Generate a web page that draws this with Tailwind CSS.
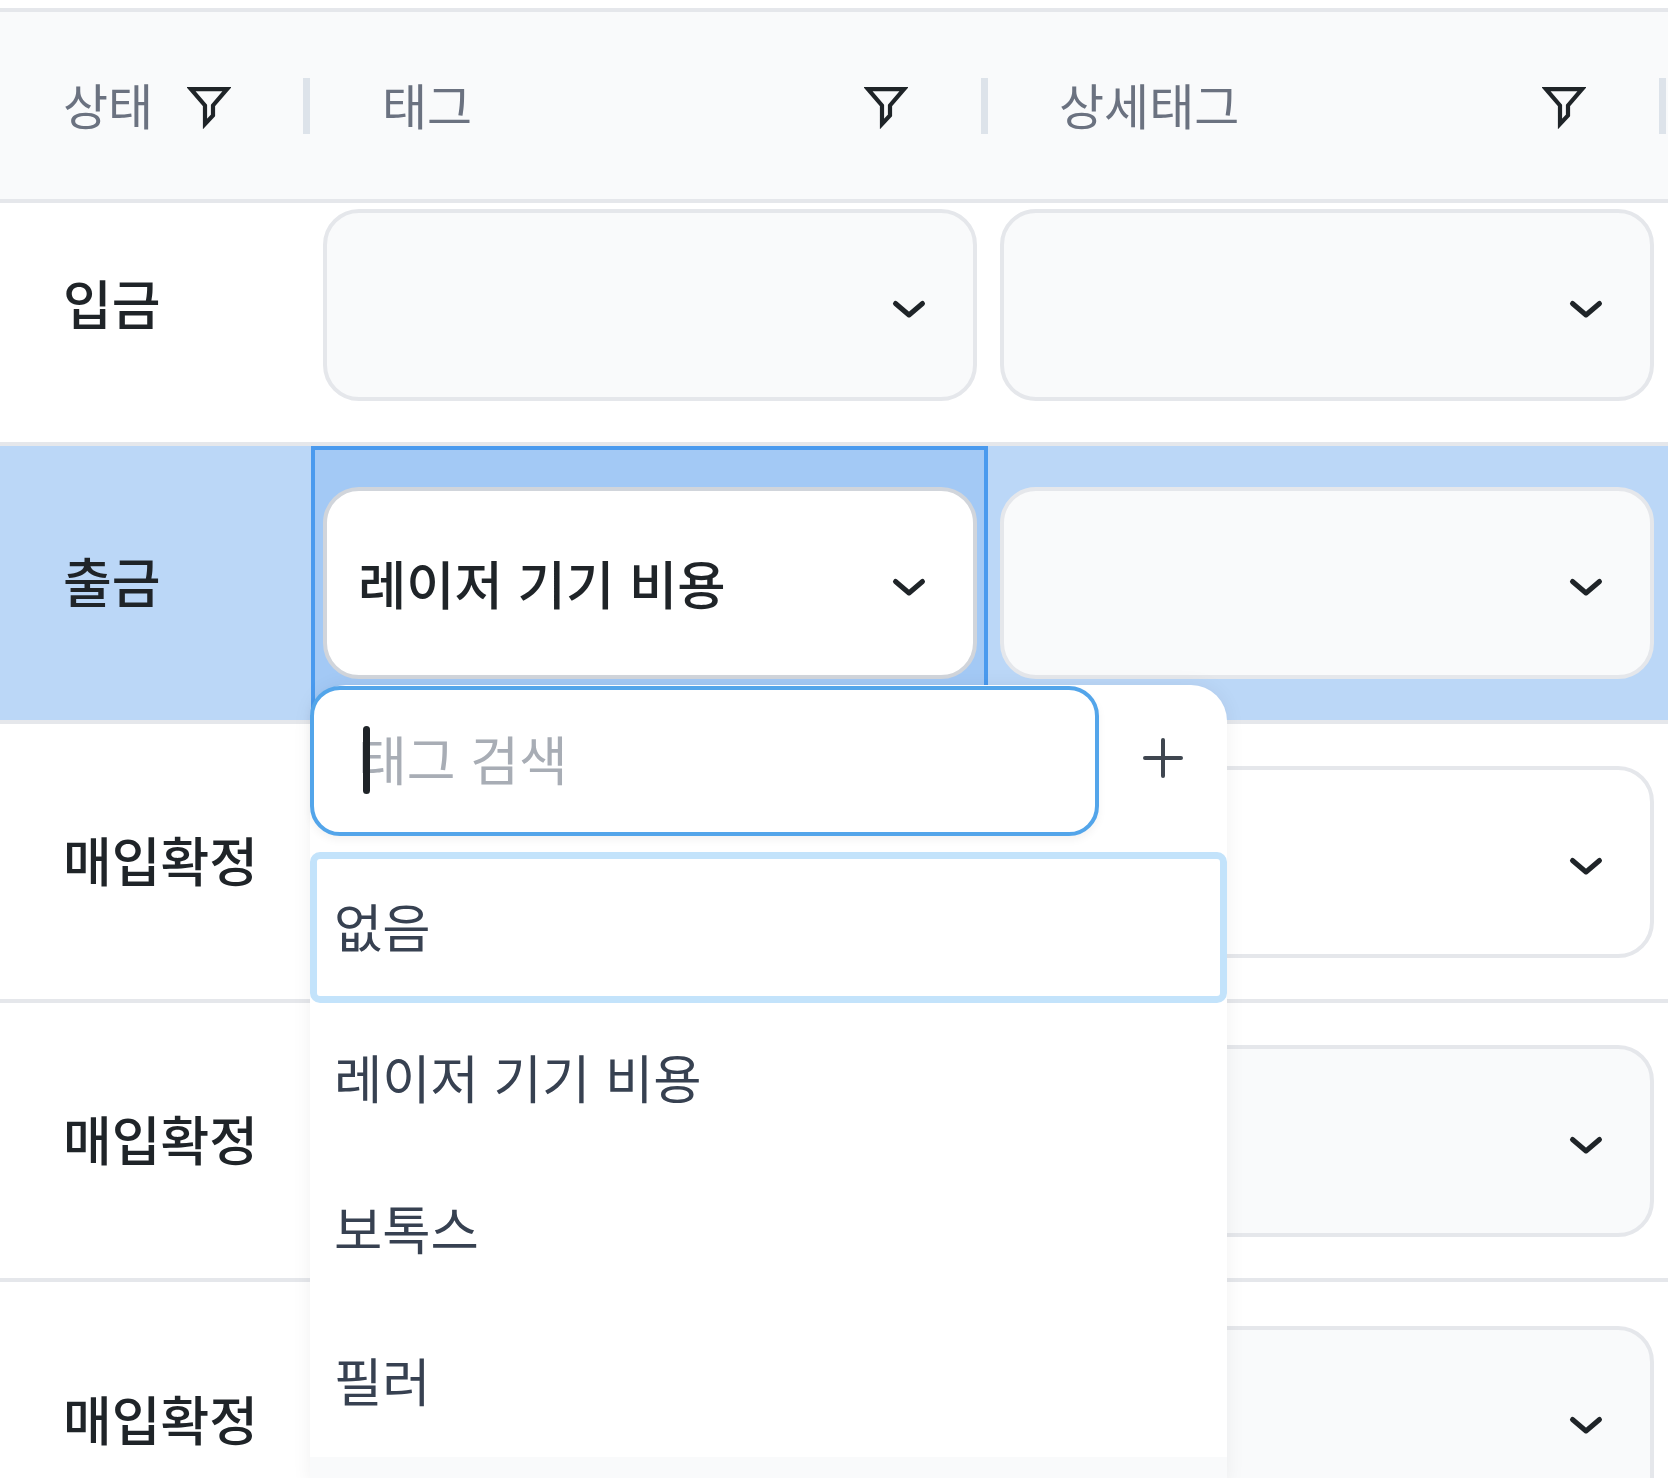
<!DOCTYPE html>
<html lang="ko">
  <head>
    <meta charset="UTF-8" />
    <title>태그</title>
    <script src="https://cdn.jsdelivr.net/npm/@tailwindcss/browser@4"></script>
  </head>
  <body class="bg-white font-['Noto_Sans_CJK_KR','Noto_Sans',sans-serif]">
    <div class="relative w-[1668px] h-[1478px] overflow-hidden pt-[8px]">
      <!-- header -->
      <div class="grid grid-cols-[310px_678px_680px] h-[195px] items-center bg-[#f9fafb] border-y-4 border-[#e5e7eb] text-[49px] text-[#6b7280]">
        <div class="flex items-center justify-between h-[56px] pl-[63px] border-r-[7px] border-[#dde3ea]">
          <span class="leading-none pb-[4px]">상태</span>
          <svg class="w-[44px] h-[42px] mt-[5px] mr-[72px] text-[#1f2428]" viewBox="0 0 44 42" fill="none" stroke="currentColor" stroke-width="4.200" stroke-miterlimit="10"><path d="M4 2.100h36L26 18.500v10L18 37V18.500z" /></svg>
        </div>
        <div class="flex items-center justify-between h-[56px] pl-[72px] border-r-[7px] border-[#dde3ea]">
          <span class="leading-none pb-[4px]">태그</span>
          <svg class="w-[44px] h-[42px] mt-[5px] mr-[73px] text-[#1f2428]" viewBox="0 0 44 42" fill="none" stroke="currentColor" stroke-width="4.200" stroke-miterlimit="10"><path d="M4 2.100h36L26 18.500v10L18 37V18.500z" /></svg>
        </div>
        <div class="flex items-center justify-between h-[56px] pl-[71px] mr-[2px] border-r-[7px] border-[#dde3ea]">
          <span class="leading-none pb-[4px]">상세태그</span>
          <svg class="w-[44px] h-[42px] mt-[5px] mr-[73px] text-[#1f2428]" viewBox="0 0 44 42" fill="none" stroke="currentColor" stroke-width="4.200" stroke-miterlimit="10"><path d="M4 2.100h36L26 18.500v10L18 37V18.500z" /></svg>
        </div>
      </div>

      <!-- 입금 -->
      <div class="grid grid-cols-[310px_678px_680px] h-[243px] pt-[6px] border-b-4 border-[#e5e7eb]">
        <div class="h-[192px] flex items-center pl-[63px] pb-[4px] text-[53px] font-medium text-[#1f2428]">입금</div>
        <div class="pl-[13px] pr-[11px]">
          <div class="h-[192px] flex items-center justify-end pr-[46px] bg-[#f9fafb] border-4 border-[#e5e7eb] rounded-[36px]">
            <svg class="w-[36px] h-[20px] mt-[8px] text-[#1f2428]" viewBox="0 0 36 20" fill="none" stroke="currentColor" stroke-width="5" stroke-linecap="round" stroke-linejoin="round"><path d="M4.500 4.500L18 16 31.500 4.500" /></svg>
          </div>
        </div>
        <div class="pl-[12px] pr-[14px]">
          <div class="h-[192px] flex items-center justify-end pr-[46px] bg-[#f9fafb] border-4 border-[#e5e7eb] rounded-[36px]">
            <svg class="w-[36px] h-[20px] mt-[8px] text-[#1f2428]" viewBox="0 0 36 20" fill="none" stroke="currentColor" stroke-width="5" stroke-linecap="round" stroke-linejoin="round"><path d="M4.500 4.500L18 16 31.500 4.500" /></svg>
          </div>
        </div>
      </div>

      <!-- 출금 (selected) -->
      <div class="grid grid-cols-[310px_678px_680px] h-[278px] bg-[#bbd7f7] border-b-4 border-[#e5e7eb]">
        <div class="flex items-center pl-[63px] pb-[4px] text-[53px] font-medium text-[#1f2428]">출금</div>
        <div class="flex items-center pl-[8px] pr-[7px] ml-[1px] bg-[#a3c9f5] border-4 border-[#4a9aee]">
          <div class="w-full h-[192px] flex items-center justify-between pl-[31px] pr-[46px] bg-white border-4 border-[#d1d5db] rounded-[36px] text-[52.500px] font-medium text-[#1f2428]">
            <span class="pb-[2px]">레이저 기기 비용</span>
            <svg class="w-[36px] h-[20px] mt-[8px] text-[#1f2428]" viewBox="0 0 36 20" fill="none" stroke="currentColor" stroke-width="5" stroke-linecap="round" stroke-linejoin="round"><path d="M4.500 4.500L18 16 31.500 4.500" /></svg>
          </div>
        </div>
        <div class="flex items-center pl-[12px] pr-[14px]">
          <div class="w-full h-[192px] flex items-center justify-end pr-[46px] bg-[#f9fafb] border-4 border-[#e5e7eb] rounded-[36px]">
            <svg class="w-[36px] h-[20px] mt-[8px] text-[#1f2428]" viewBox="0 0 36 20" fill="none" stroke="currentColor" stroke-width="5" stroke-linecap="round" stroke-linejoin="round"><path d="M4.500 4.500L18 16 31.500 4.500" /></svg>
          </div>
        </div>
      </div>

      <!-- 매입확정 rows -->
      <div class="grid grid-cols-[310px_678px_680px] h-[279px] items-center border-b-4 border-[#e5e7eb]">
        <div class="pl-[63px] pb-[4px] text-[53px] font-medium text-[#1f2428]">매입확정</div>
        <div></div>
        <div class="pl-[12px] pr-[14px]">
          <div class="h-[192px] flex items-center justify-end pr-[46px] bg-white border-4 border-[#e5e7eb] rounded-[36px]">
            <svg class="w-[36px] h-[20px] mt-[8px] text-[#1f2428]" viewBox="0 0 36 20" fill="none" stroke="currentColor" stroke-width="5" stroke-linecap="round" stroke-linejoin="round"><path d="M4.500 4.500L18 16 31.500 4.500" /></svg>
          </div>
        </div>
      </div>
      <div class="grid grid-cols-[310px_678px_680px] h-[279px] items-center border-b-4 border-[#e5e7eb]">
        <div class="pl-[63px] pb-[4px] text-[53px] font-medium text-[#1f2428]">매입확정</div>
        <div></div>
        <div class="pl-[12px] pr-[14px]">
          <div class="h-[192px] flex items-center justify-end pr-[46px] bg-[#f9fafb] border-4 border-[#e5e7eb] rounded-[36px]">
            <svg class="w-[36px] h-[20px] mt-[8px] text-[#1f2428]" viewBox="0 0 36 20" fill="none" stroke="currentColor" stroke-width="5" stroke-linecap="round" stroke-linejoin="round"><path d="M4.500 4.500L18 16 31.500 4.500" /></svg>
          </div>
        </div>
      </div>
      <div class="grid grid-cols-[310px_678px_680px] h-[279px] items-center">
        <div class="pl-[63px] pb-[6px] text-[53px] font-medium text-[#1f2428]">매입확정</div>
        <div></div>
        <div class="pl-[12px] pr-[14px]">
          <div class="h-[192px] flex items-center justify-end pr-[46px] bg-[#f9fafb] border-4 border-[#e5e7eb] rounded-[36px]">
            <svg class="w-[36px] h-[20px] mt-[6px] text-[#1f2428]" viewBox="0 0 36 20" fill="none" stroke="currentColor" stroke-width="5" stroke-linecap="round" stroke-linejoin="round"><path d="M4.500 4.500L18 16 31.500 4.500" /></svg>
          </div>
        </div>
      </div>

      <!-- tag dropdown -->
      <div class="absolute left-[310px] top-[685px] w-[917px] h-[800px] bg-white rounded-t-[36px] shadow-[0_0_20px_rgba(0,0,0,0.06)]">
        <div class="flex items-center h-[151px]">
          <div class="relative w-[789px] h-[150px] flex items-center pl-[44px] pb-[4px] bg-white border-4 border-[#53a5ea] rounded-[30px] text-[53px] text-[#a8adb5] shadow-[0_4px_8px_rgba(0,0,0,0.05)]">
            <span>태그 검색</span>
            <div class="absolute left-[49px] top-[36px] w-[7px] h-[68px] rounded-full bg-[#1f2428]"></div>
          </div>
          <svg class="ml-[43px] mb-[6px] w-[42px] h-[42px] text-[#3f4650]" viewBox="0 0 42 42" fill="none" stroke="currentColor" stroke-width="4" stroke-linecap="round"><path d="M21 3v36M3 21h36" /></svg>
        </div>
        <div class="mt-[16px] text-[52.500px] text-[#374151]">
          <div class="h-[151px] flex items-center pl-[17px] pb-[4px] border-[7px] border-[#c3e3fb] rounded-[10px]">없음</div>
          <div class="h-[151px] flex items-center pl-[24px] pb-[4px]">레이저 기기 비용</div>
          <div class="h-[151px] flex items-center pl-[24px] pb-[4px]">보톡스</div>
          <div class="h-[152px] flex items-center pl-[24px] pb-[4px]">필러</div>
          <div class="h-[151px] bg-[#f9fafb]"></div>
        </div>
      </div>
    </div>
  </body>
</html>
